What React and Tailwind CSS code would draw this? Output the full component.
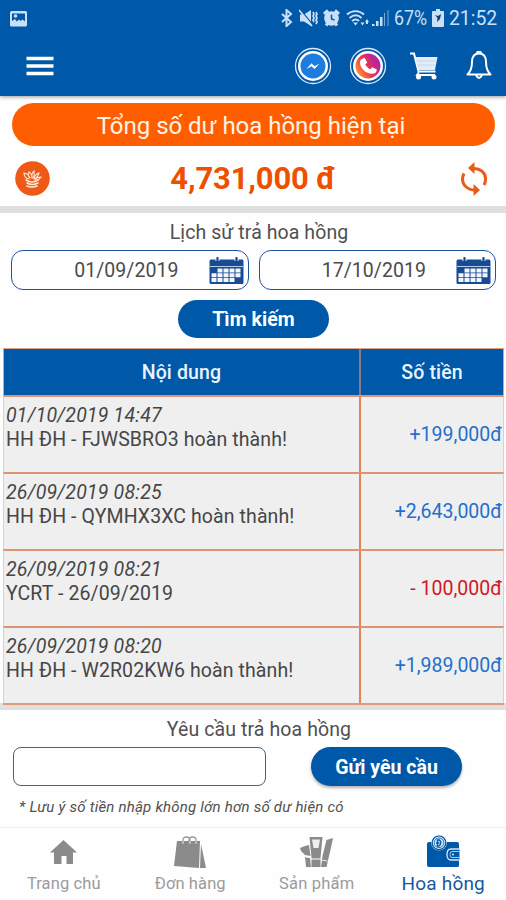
import React from 'react';

const ROWS = [
  { time: '01/10/2019 14:47', note: 'HH ĐH - FJWSBRO3 hoàn thành!', amount: '+199,000đ' },
  { time: '26/09/2019 08:25', note: 'HH ĐH - QYMHX3XC hoàn thành!', amount: '+2,643,000đ' },
  { time: '26/09/2019 08:21', note: 'YCRT - 26/09/2019', amount: '- 100,000đ', negative: true },
  { time: '26/09/2019 08:20', note: 'HH ĐH - W2R02KW6 hoàn thành!', amount: '+1,989,000đ' },
];

function StatusBar() {
  return (
    <div className="flex h-9 items-center pl-[9px] pr-[10px] text-[#c9e0f8]">
      <svg className="mt-px h-[18px] w-[19px]" viewBox="0 0 19 18">
        <rect x="1" y="1" width="17" height="15.5" rx="1.5" fill="currentColor" />
        <path d="M3 3.500H16v8l-2.500-2-2 1.500-1.500-1.500-3.500 3L3 12.500Z" fill="#0058a9" />
        <path d="M3 11l3-2 2 3-3 2H3Z" fill="currentColor" />
        <circle cx="6.500" cy="6" r="1.800" fill="currentColor" />
      </svg>
      <svg className="ml-auto h-[18px] w-3" viewBox="0 0 12 18" fill="none" stroke="currentColor" strokeWidth="2">
        <path d="M1 5l9 8-4.500 4V1L10 5l-9 8" />
      </svg>
      <svg className="ml-[6px] h-[18px] w-[19px]" viewBox="0 0 19 18" fill="none" stroke="currentColor" strokeWidth="1.700">
        <path d="M1 5.500h4l7-4.500v16l-7-4.500H1Z" fill="currentColor" stroke="none" />
        <path d="M1.500 1l13 15.500" stroke="#0058a9" strokeWidth="1.200" />
        <path d="M0 1l13 16M14 3l1 2-1 2 1 2-1 2 1 2M17 3l1 2-1 2 1 2-1 2 1 2-1 2" />
      </svg>
      <svg className="ml-[5px] h-[18px] w-[17px]" viewBox="0 0 17 18">
        <path d="M1 5l4-3.500M16 5l-4-3.500M3 16.500l2-2.500M14 16.500L12 14" stroke="currentColor" strokeWidth="3" />
        <circle cx="8.500" cy="9.500" r="7.300" fill="currentColor" />
        <path d="M8.500 5.500v4.500l3 1" fill="none" stroke="#0058a9" strokeWidth="1.500" />
      </svg>
      <svg className="ml-[6px] h-[18px] w-6" viewBox="0 0 24 18" fill="none" stroke="currentColor" strokeWidth="1.900">
        <path d="M1 5.500C6 1 13 1 18 5.500M3.500 9c4-3.300 8.500-3.300 12 0M6 12c2.500-2 5-2 7 0" />
        <path d="M7 13.500h5l-2.500 3Z" fill="currentColor" stroke="none" />
        <path d="M14.500 13.500l2 3 2-3ZM19 13l2-3 2 3h-1v2h-2v-2Z" fill="currentColor" stroke="none" />
      </svg>
      <svg className="ml-[1px] h-[18px] w-[18px]" viewBox="0 0 18 18" fill="currentColor">
        <path d="M1 15h2.500v2H1ZM5 12h2.500v5H5ZM9 8h2.500v9H9Z" />
        <path d="M13 4h1v13h-1ZM16.500 1h1v16h-1Z" opacity=".6" />
      </svg>
      <span className="ml-[5px] w-[38px] whitespace-nowrap">
        <span className="block w-[42px] origin-left scale-x-[0.85] text-[21px] leading-none">67%</span>
      </span>
      <svg className="ml-0 h-[18px] w-3" viewBox="0 0 12 18">
        <path d="M4 0h4v2h3q1 0 1 1v14q0 1-1 1H1q-1 0-1-1V3q0-1 1-1h3Z" fill="currentColor" />
        <path d="M3 6l3 1 3-2-1 5-3 3 .5-4Z" fill="#123f70" />
      </svg>
      <span className="ml-[5px] w-[47px] whitespace-nowrap">
        <span className="block w-[52px] origin-left scale-x-[0.92] text-[21px] leading-none">21:52</span>
      </span>
    </div>
  );
}

function Toolbar() {
  return (
    <div className="flex h-[60px] items-center pb-px pl-[26px] pr-[14px] text-white">
      <svg className="h-5 w-[28px]" viewBox="0 0 28 20">
        <path d="M.5 2.500h27M.5 10h27M.5 17.500h27" stroke="white" strokeWidth="3.600" />
      </svg>
      <svg className="ml-auto h-[38px] w-[38px]" viewBox="0 0 38 38">
        <circle cx="19" cy="19" r="17.500" fill="none" stroke="#d8e9fa" strokeWidth="1.300" />
        <circle cx="19" cy="19" r="15" fill="white" />
        <circle cx="19" cy="19" r="12.500" fill="#1b7ddd" />
        <path d="M12.500 22l5-5.700 3 2.900 5-2.700-5 5.500-3-2.800Z" fill="white" />
      </svg>
      <svg className="ml-[17px] h-[38px] w-[38px]" viewBox="0 0 38 38">
        <defs>
          <linearGradient id="call" x1="0" y1="0.800" x2="1" y2="0.200">
            <stop offset="0" stopColor="#ffa22e" />
            <stop offset=".45" stopColor="#ee334f" />
            <stop offset="1" stopColor="#9a20bd" />
          </linearGradient>
        </defs>
        <circle cx="19" cy="19" r="17.500" fill="none" stroke="#d8e9fa" strokeWidth="1.300" />
        <circle cx="19" cy="19" r="15" fill="white" />
        <circle cx="19" cy="19" r="12.500" fill="url(#call)" />
        <path d="M13 12l2.500-1.300 2.800 4.800-2 2c1.200 2.400 2.800 3.700 5 4.700l2-2 4.500 2.200c0 2.800-2 4.600-5 4.400C16 26.500 10.700 20.500 11 15c0-1.500.8-2.500 2-3Z" fill="white" />
      </svg>
      <svg className="ml-[23px] h-7 w-[28px]" viewBox="0 0 28 28">
        <path d="M0 1.500h4l4.500 18h17" fill="none" stroke="white" strokeWidth="2" />
        <path d="M5 5h22.500l-2.500 13H8.500Z" fill="#e4edf6" />
        <path d="M6 9h20M7 13h18" stroke="#b9cfe5" strokeWidth=".7" />
        <path d="M9 20l-2 3h18" fill="none" stroke="white" strokeWidth="1.800" />
        <circle cx="8.500" cy="25" r="2.500" fill="white" />
        <circle cx="24" cy="25" r="2.500" fill="white" />
      </svg>
      <svg className="ml-[28px] h-[29px] w-[26px]" viewBox="0 0 26 29" fill="none" stroke="white" strokeWidth="2" strokeLinejoin="round">
        <path d="M13 2.500c-5 0-7 3.500-7 8.500 0 6-1 9-4.500 12.500h23c-3.500-3.500-4.500-6.500-4.500-12.500 0-5-2-8.500-7-8.500Z" />
        <path d="M11 2.500q0-2 2-2t2 2M10 24q3 6 6 0" />
      </svg>
    </div>
  );
}

function CalendarIcon() {
  return (
    <svg className="h-[27px] w-[35px]" viewBox="0 0 35 27">
      <rect x=".5" y="2.500" width="34" height="24.500" rx="1.500" fill="#174b96" />
      <path d="M1 9.500h33" stroke="#b8cde6" strokeWidth="1" />
      <g fill="#f3f7fc">
        <path d="M8.500 11.500h5v4h-5ZM14.500 11.500h5v4h-5ZM20.500 11.500h5v4h-5ZM26.500 11.500h5v4h-5Z" />
        <path d="M2.500 16.200h5v4h-5ZM8.500 16.200h5v4h-5ZM14.500 16.200h5v4h-5ZM20.500 16.200h5v4h-5ZM26.500 16.200h5v4h-5Z" />
        <path d="M2.500 21h5v4h-5ZM8.500 21h5v4h-5ZM14.500 21h5v4h-5ZM20.500 21h5v4h-5Z" />
      </g>
      <path d="M8.500 0v4M27.500 0v4" stroke="white" strokeWidth="4" />
      <path d="M8.500 1v3.500M27.500 1v3.500" stroke="#174b96" strokeWidth="2.200" strokeLinecap="round" />
    </svg>
  );
}

function DateField({ value }) {
  return (
    <div className="flex h-[40px] flex-1 items-center justify-end rounded-xl border-[1.5px] border-[#1d559f] pr-[4px]">
      <span className="mr-[30px] whitespace-nowrap pt-px text-[19.500px] tracking-[0.05px] text-[#4b4b4b]">{value}</span>
      <CalendarIcon />
    </div>
  );
}

function HomeIcon() {
  return (
    <svg className="h-[34px] w-[34px]" viewBox="0 0 34 34" fill="#8b8b8b">
      <path d="M17.500 5l13.500 12.500H27V29h-6.500v-8h-5v8H8V17.500H4Z" />
    </svg>
  );
}

function BagIcon() {
  return (
    <svg className="h-[34px] w-[34px]" viewBox="0 0 34 34">
      <path d="M4 6h23l-1 27L1 31Z" fill="#8b8b8b" />
      <path d="M28 9l5 24h-6Z" fill="#8b8b8b" />
      <path d="M10 8V5q0-3 3.500-3T17 5v3M16 8V5q0-3 3.500-3T23 5v3" fill="none" stroke="#999" strokeWidth="1.300" />
      <path d="M10 6v3M17 6v3M23 6v3" stroke="white" strokeWidth=".8" />
    </svg>
  );
}

function ProductIcon() {
  return (
    <svg className="h-[34px] w-[34px]" viewBox="0 0 34 34" fill="#8b8b8b">
      <path d="M10.500 2h13l-2 21v9h-9v-9Z" />
      <path d="M13 4.500h8l-1.500 8.500h-5Z" fill="#eee" />
      <path d="M12 24h9.500" stroke="white" strokeWidth="1" />
      <path d="M27.500 5l6.500-2-1 5-5.500 24H22l1.500-11Z" />
      <path d="M22.500 25l6 1" stroke="white" strokeWidth=".8" />
      <path d="M1 13l5-2 4-1 1.500 11-5.500-1-4-4Z" />
      <path d="M6 22l5 1 1 9H7Z" />
      <path d="M4 20q3 3 7 2" fill="none" stroke="white" strokeWidth="1" />
    </svg>
  );
}

function WalletIcon() {
  return (
    <svg className="h-[34px] w-[34px]" viewBox="0 0 34 34">
      <path d="M3 7h28q2 0 2 2v21.500q0 1.500-2 1.500H3q-2 0-2-2V9q0-2 2-2Z" fill="#0058a9" />
      <circle cx="13" cy="7.800" r="7.800" fill="#d9e9f8" />
      <circle cx="13" cy="7.800" r="6.800" fill="none" stroke="#0058a9" strokeWidth="1.200" />
      <circle cx="13" cy="7.800" r="4.800" fill="none" stroke="#0058a9" strokeWidth=".8" />
      <path d="M11.500 5h2q3 3-.5 6h-1.500ZM10 8h3.500" fill="none" stroke="#0058a9" strokeWidth="1.400" />
      <path d="M33.500 14H25q-4 0-4 5.500t4 5.500h8.500" fill="#0058a9" stroke="#d9e9f8" strokeWidth="1.300" />
      <path d="M33.500 16.500H26q-2 0-2 3t2 3h7.500" fill="none" stroke="#d9e9f8" strokeWidth=".8" />
      <circle cx="27" cy="19.500" r="1" fill="#d9e9f8" />
    </svg>
  );
}

const TABS = [
  { label: 'Trang chủ', Icon: HomeIcon, style: 'text-[16.500px] tracking-[0.1px] pl-px text-[#9b9b9b]' },
  { label: 'Đơn hàng', Icon: BagIcon, style: 'text-[16.500px] tracking-[0.1px] pl-px text-[#9b9b9b]' },
  { label: 'Sản phẩm', Icon: ProductIcon, style: 'text-[16.500px] tracking-[0.2px] pl-px text-[#9b9b9b]' },
  { label: 'Hoa hồng', Icon: WalletIcon, style: 'text-[19px] tracking-[0.2px] pl-px text-[#17599f]' },
];

export default function App() {
  return (
    <div className="flex h-[900px] w-[506px] flex-col overflow-hidden bg-[#fefefe] font-['Roboto',sans-serif]">
      <header className="h-24 shrink-0 bg-[#0058a9] shadow-[0_1px_4px_rgba(0,0,0,0.4)]">
        <StatusBar />
        <Toolbar />
      </header>

      <section className="h-[110px] shrink-0 pl-3 pr-[11px] pt-[7px]">
        <h1 className="flex h-[43px] items-center justify-center rounded-full bg-[#ff5e00] pr-[5px] pt-0.5 text-[24px] tracking-[-0.02px] text-[#fff3e6]">
          Tổng số dư hoa hồng hiện tại
        </h1>
        <div className="flex h-[60px] items-center justify-between pl-[3px] pr-[8px]">
          <svg className="mb-[-5px] h-[35px] w-[35px]" viewBox="0 0 35 35">
            <circle cx="17.500" cy="17.500" r="17.300" fill="#ee5a16" />
            <g fill="none" stroke="#ffe9d8" strokeWidth="1.600" strokeLinecap="round">
              <path d="M11 19q6 4 12 0M12 22q5.500 3 11 0M12 25q5 2 10 0" />
              <path d="M14 18q-5-1-5-6 5 1 6 5M15 17q-3-3-1-6 3 2 3 5M17 17q-1-4 2-7 1 4-1 7M19 18q1-5 5-6-1 4-4 6M20 19q2-3 6-3-2 3-5 4" strokeWidth="1.100" />
            </g>
          </svg>
          <strong className="mr-[5px] mt-[5px] whitespace-nowrap text-[31px] font-bold leading-none tracking-[-0.15px] text-[#ee5000]">4,731,000 đ</strong>
          <svg className="mt-[5px] h-[34px] w-[26px]" viewBox="0 0 26 34" fill="none" stroke="#e95b17" strokeWidth="3">
            <path d="M12 6.500c8 0 13 4.500 12.500 11 0 2.500-.7 4-1.500 5.500M14 28C6.500 28 1.500 23 1.500 17c0-2.500.7-4 1.500-5.500" />
            <path d="M13.500 0v12L7 6ZM12.500 22v12l6.500-6Z" fill="#e95b17" stroke="none" />
          </svg>
        </div>
      </section>

      <div className="h-[7px] shrink-0 bg-[#dedede]" />

      <section className="flex h-[135px] shrink-0 flex-col items-center pl-[11px] pr-[10px]">
        <h2 className="flex h-[37px] items-center whitespace-nowrap pl-[11px] pt-[3px] text-[19.500px] tracking-[0.08px] text-[#505050]">Lịch sử trả hoa hồng</h2>
        <div className="flex w-full gap-[10px]">
          <DateField value="01/09/2019" />
          <DateField value="17/10/2019" />
        </div>
        <button className="mt-[10px] h-[38px] w-[151px] rounded-full bg-[#0058a9] pt-0.5 text-[19.500px] font-bold tracking-[0.05px] text-white">Tìm kiếm</button>
      </section>

      <section className="flex h-[355px] shrink-0 flex-col pl-[3px] pr-[2px]">
        <div className="flex h-[47px] border-x border-t border-[#dfa383] bg-[#0058a9] text-[19.500px] font-medium tracking-[0.15px] text-[#eaf4ff]">
          <div className="flex w-[355px] items-center justify-center pt-px">Nội dung</div>
          <div className="flex flex-1 items-center justify-center border-l-2 border-[#8c7a86] pt-px">Số tiền</div>
        </div>
        {ROWS.map((row) => (
          <div key={row.time} className="flex h-[77px] border-x border-t-2 border-x-[#efcbb4] border-t-[#dc9474] bg-[#efefef]">
            <div className="w-[355px] whitespace-nowrap pl-[2px] pt-[7px] text-[19.500px] leading-[24px] tracking-[0.1px] text-[#464646]">
              <div className="italic tracking-[0.2px]">{row.time}</div>
              <div>{row.note}</div>
            </div>
            <div className="flex flex-1 items-center justify-end border-l-2 border-[#dc8660] pr-px pt-px text-[19.500px] tracking-[0.02px]">
              <span className={row.negative ? 'text-[#cf1825]' : 'text-[#246fcb]'}>{row.amount}</span>
            </div>
          </div>
        ))}
      </section>

      <div className="h-[7px] shrink-0 bg-[#e0e0e0] pl-[3px] pr-[2px]">
        <div className="h-0.5 bg-[#df9b7c]" />
      </div>

      <section className="flex h-[117px] shrink-0 flex-col px-[13px]">
        <h2 className="flex h-[37px] items-center justify-center whitespace-nowrap pl-[12px] pt-[3px] text-[19.500px] tracking-[0.1px] text-[#505050]">Yêu cầu trả hoa hồng</h2>
        <div className="flex gap-[45px]">
          <input className="h-[39px] w-[253px] rounded-lg border-[1.5px] border-[#286b9d] bg-white" />
          <button className="h-[39px] w-[151px] rounded-full bg-[#0058a9] pt-[3px] text-[19.500px] font-bold text-white shadow-[0_2px_3px_rgba(0,0,0,0.3)]">Gửi yêu cầu</button>
        </div>
        <p className="mt-[10px] whitespace-nowrap pl-[6px] text-[15px] italic tracking-[0.22px] text-[#505050]">* Lưu ý số tiền nhập không lớn hơn số dư hiện có</p>
      </section>

      <nav className="grid h-[73px] shrink-0 grid-cols-4 border-t border-[#eeeeee]">
        {TABS.map(({ label, Icon, style }) => (
          <div key={label} className="flex flex-col items-center pt-[7px]">
            <Icon />
            <span className={`flex h-[30px] items-center whitespace-nowrap ${style}`}>{label}</span>
          </div>
        ))}
      </nav>
    </div>
  );
}
